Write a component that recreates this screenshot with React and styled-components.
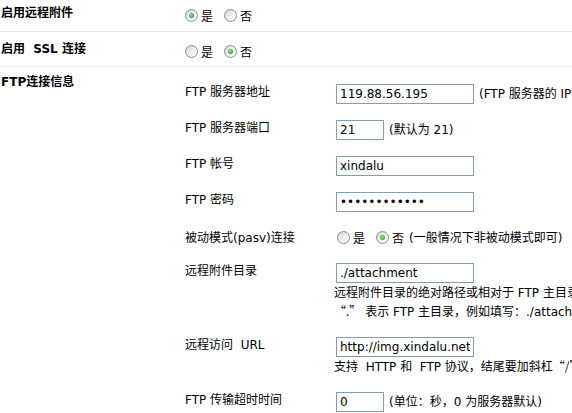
import React from "react";
import styled, { createGlobalStyle } from "styled-components";

const Global = createGlobalStyle`
  html, body { margin: 0; padding: 0; background: #fff; overflow: hidden; }
  body {
    font-family: "DejaVu Sans", "Noto Sans CJK SC", sans-serif;
    font-size: 12px;
    color: #000;
  }
`;

const Page = styled.div`
  width: 572px;
  height: 413px;
  overflow: hidden;
`;

const Row = styled.div`
  display: grid;
  grid-template-columns: 185px 1fr;
  align-items: start;
  box-sizing: border-box;
  padding-top: ${(p) => p.$pt}px;
  height: ${(p) => (p.$h ? `${p.$h}px` : "auto")};
  border-bottom: ${(p) => (p.$last ? "none" : "1px solid #ededed")};
`;

const RowLabel = styled.div`
  font-weight: bold;
  line-height: 14px;
  padding-left: 1px;
  white-space: nowrap;
`;

const RadioGroup = styled.div`
  display: flex;
  align-items: center;
  height: ${(p) => p.$h || 14}px;
  margin-top: ${(p) => p.$mt || 0}px;
  margin-left: ${(p) => p.$ml || 0}px;
  white-space: nowrap;
`;

const Option = styled.label`
  display: inline-flex;
  align-items: center;
  margin-right: ${(p) => (p.$last ? 5 : 11)}px;
`;

const Radio = styled.span`
  width: 13px;
  height: 13px;
  box-sizing: border-box;
  border-radius: 50%;
  border: 1px solid #7890a8;
  background: linear-gradient(135deg, #d6d6d0 0%, #f1f1ee 55%, #ffffff 100%);
  display: inline-flex;
  align-items: center;
  justify-content: center;
  margin-right: 3px;
  &::after {
    content: "";
    width: 5px;
    height: 5px;
    border-radius: 50%;
    background: ${(p) =>
      p.$checked
        ? "radial-gradient(circle at 40% 40%, #9be69b 0%, #3cb33c 55%, #1f8f1f 100%)"
        : "transparent"};
  }
`;

const Inner = styled.div`
  margin-top: 1px;
`;

const InnerRow = styled.div`
  display: grid;
  grid-template-columns: 149px 1fr;
  align-items: ${(p) => (p.$center ? "center" : "start")};
  padding: 8px 0;
`;

const InnerLabel = styled.div`
  line-height: 16px;
  white-space: nowrap;
`;

const Value = styled.div`
  display: flex;
  flex-direction: ${(p) => (p.$col ? "column" : "row")};
  align-items: ${(p) => (p.$col ? "flex-start" : "center")};
  min-width: 0;
  white-space: nowrap;
`;

const Input = styled.input`
  box-sizing: border-box;
  width: ${(p) => p.$w}px;
  height: 20px;
  margin: 0 0 0 2px;
  padding: 0 3px;
  border: 1px solid #7f9db9;
  background: #fff;
  font-family: "DejaVu Sans", sans-serif;
  font-size: 12px;
  color: #000;
  outline: none;
`;

const Hint = styled.span`
  margin-left: ${(p) => (p.$ml === undefined ? 5 : p.$ml)}px;
  line-height: 16px;
  white-space: nowrap;
`;

const Desc = styled.div`
  line-height: 18px;
  white-space: nowrap;
`;

const Q = styled.span`
  font-family: "Noto Sans CJK SC", sans-serif;
`;

function Radios({ value, h, mt, ml, children }) {
  return (
    <RadioGroup $h={h} $mt={mt} $ml={ml}>
      <Option>
        <Radio $checked={value === "yes"} />是
      </Option>
      <Option $last>
        <Radio $checked={value === "no"} />否
      </Option>
      {children}
    </RadioGroup>
  );
}

export default function App() {
  return (
    <Page>
      <Global />
      <Row $pt={6} $h={32}>
        <RowLabel>启用远程附件</RowLabel>
        <Radios value="yes" mt={2} />
      </Row>
      <Row $pt={10} $h={35}>
        <RowLabel>启用&nbsp; SSL 连接</RowLabel>
        <Radios value="no" mt={2} />
      </Row>
      <Row $pt={8} $last>
        <RowLabel>FTP连接信息</RowLabel>
        <Inner>
          <InnerRow>
            <InnerLabel>FTP 服务器地址</InnerLabel>
            <Value>
              <Input $w={138} defaultValue="119.88.56.195" />
              <Hint>(FTP 服务器的 IP 地址或域名)</Hint>
            </Value>
          </InnerRow>
          <InnerRow>
            <InnerLabel>FTP 服务器端口</InnerLabel>
            <Value>
              <Input $w={48} defaultValue="21" />
              <Hint>(默认为 21)</Hint>
            </Value>
          </InnerRow>
          <InnerRow>
            <InnerLabel>FTP 帐号</InnerLabel>
            <Value>
              <Input $w={138} defaultValue="xindalu" />
            </Value>
          </InnerRow>
          <InnerRow>
            <InnerLabel>FTP 密码</InnerLabel>
            <Value>
              <Input $w={138} type="password" defaultValue="************" />
            </Value>
          </InnerRow>
          <InnerRow $center>
            <InnerLabel>被动模式(pasv)连接</InnerLabel>
            <Radios value="no" h={19} ml={3}>
              <Hint $ml={0}>(一般情况下非被动模式即可)</Hint>
            </Radios>
          </InnerRow>
          <InnerRow>
            <InnerLabel>远程附件目录</InnerLabel>
            <Value $col>
              <Input $w={138} defaultValue="./attachment" />
              <Desc>远程附件目录的绝对路径或相对于 FTP 主目录的相对路径，结尾不要加斜杠<Q>“/”</Q>，</Desc>
              <Desc>
                <Q>“.”</Q> 表示 FTP 主目录，例如填写：./attachment
              </Desc>
            </Value>
          </InnerRow>
          <InnerRow>
            <InnerLabel>远程访问&nbsp; URL</InnerLabel>
            <Value $col>
              <Input $w={138} defaultValue="http://img.xindalu.net" />
              <Desc>
                支持&nbsp; HTTP 和&nbsp; FTP 协议，结尾要加斜杠<Q>“/”</Q>；如果使用 FTP 协议
              </Desc>
            </Value>
          </InnerRow>
          <InnerRow>
            <InnerLabel>FTP 传输超时时间</InnerLabel>
            <Value>
              <Input $w={48} defaultValue="0" />
              <Hint>(单位：秒，0 为服务器默认)</Hint>
            </Value>
          </InnerRow>
        </Inner>
      </Row>
    </Page>
  );
}
